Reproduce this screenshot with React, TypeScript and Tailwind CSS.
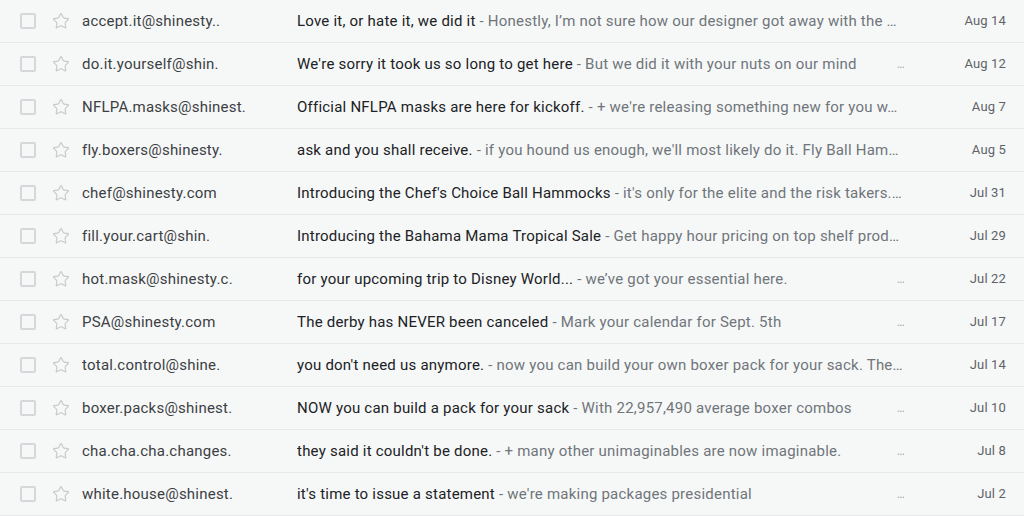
import { Star } from "lucide-react";

interface Mail {
  from: string;
  subject: string;
  snippet: string;
  date: string;
  more?: boolean;
}

// snippets are stored as they show in the list, already cut
const mails: Mail[] = [
  { from: "accept.it@shinesty..", subject: "Love it, or hate it, we did it", snippet: "Honestly, I’m not sure how our designer got away with the …", date: "Aug 14" },
  { from: "do.it.yourself@shin.", subject: "We're sorry it took us so long to get here", snippet: "But we did it with your nuts on our mind", date: "Aug 12", more: true },
  { from: "NFLPA.masks@shinest.", subject: "Official NFLPA masks are here for kickoff.", snippet: "+ we're releasing something new for you w…", date: "Aug 7" },
  { from: "fly.boxers@shinesty.", subject: "ask and you shall receive.", snippet: "if you hound us enough, we'll most likely do it. Fly Ball Ham…", date: "Aug 5" },
  { from: "chef@shinesty.com", subject: "Introducing the Chef's Choice Ball Hammocks", snippet: "it's only for the elite and the risk takers.…", date: "Jul 31" },
  { from: "fill.your.cart@shin.", subject: "Introducing the Bahama Mama Tropical Sale", snippet: "Get happy hour pricing on top shelf prod…", date: "Jul 29" },
  { from: "hot.mask@shinesty.c.", subject: "for your upcoming trip to Disney World...", snippet: "we’ve got your essential here.", date: "Jul 22", more: true },
  { from: "PSA@shinesty.com", subject: "The derby has NEVER been canceled", snippet: "Mark your calendar for Sept. 5th", date: "Jul 17", more: true },
  { from: "total.control@shine.", subject: "you don't need us anymore.", snippet: "now you can build your own boxer pack for your sack. The…", date: "Jul 14" },
  { from: "boxer.packs@shinest.", subject: "NOW you can build a pack for your sack", snippet: "With 22,957,490 average boxer combos", date: "Jul 10", more: true },
  { from: "cha.cha.cha.changes.", subject: "they said it couldn't be done.", snippet: "+ many other unimaginables are now imaginable.", date: "Jul 8", more: true },
  { from: "white.house@shinest.", subject: "it's time to issue a statement", snippet: "we're making packages presidential", date: "Jul 2", more: true },
];

function MailRow({ mail }: { mail: Mail }) {
  return (
    <div className="flex h-[43px] items-center border-b border-[#e6e8eb] text-[15px] tracking-[0.22px]">
      <div className="ml-[20px] h-[16px] w-[16px] shrink-0 rounded-[2px] border-2 border-[#d5d8da]" />
      <Star className="ml-[16px] h-[18px] w-[18px] shrink-0 text-[#c7cacc]" strokeWidth={1.6} />
      <div className="ml-[12px] w-[215px] shrink-0 truncate text-[#3c4043]">{mail.from}</div>
      <div className="flex w-[609px] min-w-0 items-center">
        <div className="min-w-0 truncate">
          <span className="text-[#202124]">{mail.subject}</span>
          <span className="text-[#70757a]"> - {mail.snippet}</span>
        </div>
        {mail.more && <span className="ml-auto pr-[1px] text-[12px] text-[#a0a4a8]">…</span>}
      </div>
      <div className="flex-1 pr-[18px] text-right text-[13px] tracking-[0.15px] text-[#5f6368]">{mail.date}</div>
    </div>
  );
}

export default function App() {
  return (
    <div className="h-[516px] w-[1024px] overflow-hidden bg-[#f6f8f8]" style={{ fontFamily: "Roboto, 'Liberation Sans', sans-serif" }}>
      {mails.map((m) => (
        <MailRow key={m.date + m.from} mail={m} />
      ))}
    </div>
  );
}
